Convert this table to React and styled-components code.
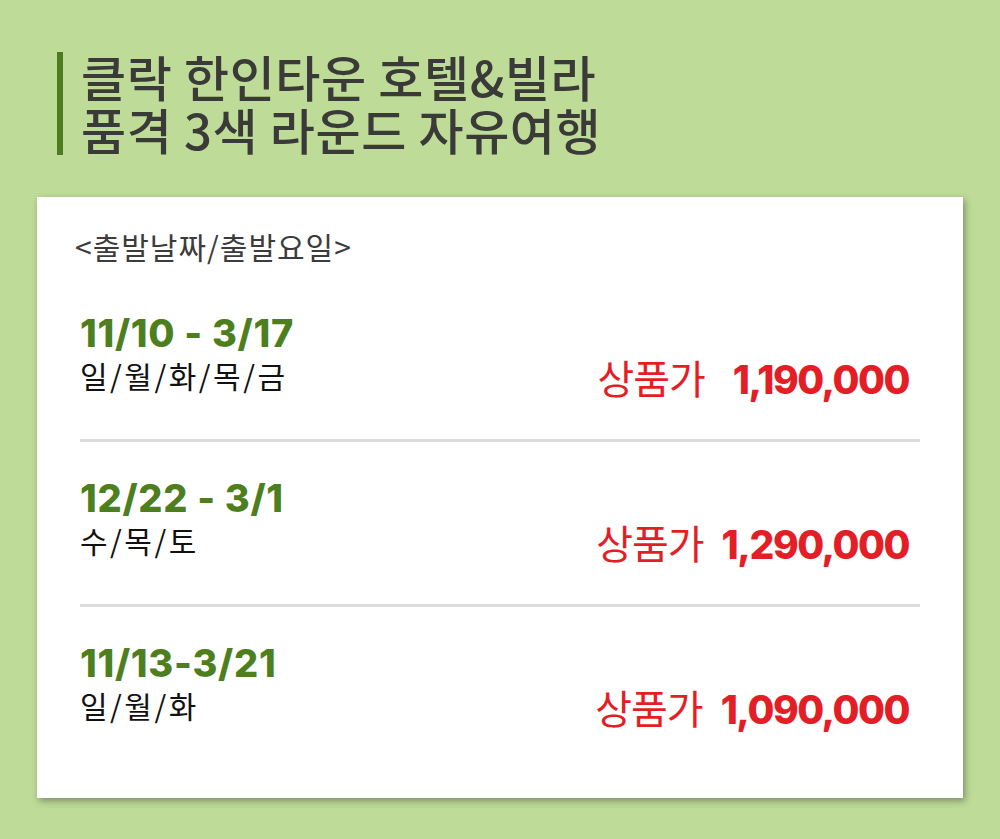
import React from 'react';
import styled, { createGlobalStyle } from 'styled-components';

const GlobalStyle = createGlobalStyle`
  html, body {
    margin: 0;
    padding: 0;
    background: #bedb98;
  }
  body {
    font-family: "Noto Sans CJK KR", "Noto Sans", sans-serif;
  }
`;

const Page = styled.div`
  width: 1000px;
  height: 839px;
  background: #bedb98;
  padding: 52px 37px 0 37px;
  box-sizing: border-box;
`;

const Header = styled.header`
  display: flex;
  align-items: stretch;
  margin-left: 20px;
`;

const Bar = styled.div`
  width: 6px;
  height: 103px;
  background: #4e7a22;
  flex-shrink: 0;
`;

const Title = styled.h1`
  margin: -3px 0 0 18px;
  font-size: 49px;
  font-weight: 500;
  line-height: 53px;
  color: #3a3b38;
  letter-spacing: 0.6px;
  white-space: nowrap;
`;

const Card = styled.section`
  margin-top: 42px;
  width: 926px;
  height: 601px;
  background: #fff;
  box-shadow: 2px 3px 7px rgba(0, 0, 0, 0.35);
  padding: 30px 45px 0 41px;
  box-sizing: border-box;
`;

const Caption = styled.div`
  font-size: 30px;
  color: #3c3c3c;
  line-height: 38px;
  letter-spacing: 1px;
  margin-bottom: 44px;
  margin-left: -3px;
`;

const Row = styled.div`
  display: flex;
  justify-content: space-between;
  align-items: flex-end;
  padding: ${p => (p.first ? '0' : '32px')} 0 ${p => (p.last ? '0' : '46px')};
  border-bottom: ${p => (p.last ? 'none' : '3px solid #dcdcdc')};
  margin-left: 2px;
  margin-right: -2px;
`;

const Left = styled.div`
  display: flex;
  flex-direction: column;
`;

const DateText = styled.div`
  font-family: Inter, "Noto Sans", sans-serif;
  font-size: 38px;
  font-weight: 800;
  color: #4e7f1f;
  line-height: 48px;
  letter-spacing: 0.7px;
`;

const Days = styled.div`
  font-size: 30px;
  color: #111;
  line-height: 36px;
  letter-spacing: 2.5px;
`;

const Price = styled.div`
  display: flex;
  align-items: baseline;
  gap: ${p => p.gap}px;
  color: #e41e26;
  margin-bottom: -13px;
  margin-right: 11px;
`;

const PriceLabel = styled.span`
  font-size: 40px;
  font-weight: 400;
  letter-spacing: -1px;
`;

const PriceValue = styled.span`
  font-family: Inter, "Noto Sans", sans-serif;
  font-size: 39px;
  font-weight: 800;
  letter-spacing: -1.5px;
`;

const items = [
  { date: '11/10 - 3/17', days: '일/월/화/목/금', price: '1,190,000', gap: 28 },
  { date: '12/22 - 3/1', days: '수/목/토', price: '1,290,000', gap: 18 },
  { date: '11/13-3/21', days: '일/월/화', price: '1,090,000', gap: 18 },
];

export default function App() {
  return (
    <>
      <GlobalStyle />
      <Page>
        <Header>
          <Bar />
          <Title>
            클락 한인타운 호텔&빌라
            <br />
            품격 3색 라운드 자유여행
          </Title>
        </Header>
        <Card>
          <Caption>&lt;출발날짜/출발요일&gt;</Caption>
          {items.map((item, i) => (
            <Row key={item.date} first={i === 0} last={i === items.length - 1}>
              <Left>
                <DateText>{item.date}</DateText>
                <Days>{item.days}</Days>
              </Left>
              <Price gap={item.gap}>
                <PriceLabel>상품가</PriceLabel>
                <PriceValue>{item.price}</PriceValue>
              </Price>
            </Row>
          ))}
        </Card>
      </Page>
    </>
  );
}
